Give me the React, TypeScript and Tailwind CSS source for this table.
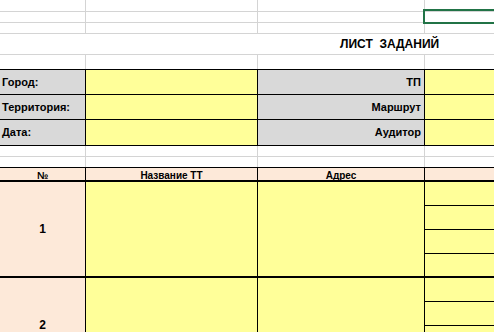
import React from 'react';

const cols = 'grid grid-cols-[86px_172px_167px_1fr]';
const font = { fontFamily: '"Liberation Sans", Arial, sans-serif' };

function BlankRow({ h, bottom = true }: { h: string; bottom?: boolean }) {
  return (
    <div className={`${cols} ${h} ${bottom ? 'border-b border-[#d4d4d4]' : ''}`}>
      <div className="border-r border-[#d4d4d4]" />
      <div className="border-r border-[#d4d4d4]" />
      <div className="border-r border-[#d4d4d4]" />
      <div />
    </div>
  );
}

function InfoRow({ left, right, h, top = false }: { left: string; right: string; h: string; top?: boolean }) {
  return (
    <div className={`${cols} ${h} border-b border-black ${top ? 'border-t' : ''}`}>
      <div className="bg-[#d9d9d9] border-r border-black flex items-center pl-[2px] text-[11px] font-bold">{left}</div>
      <div className="bg-[#ffff99] border-r border-black" />
      <div className="bg-[#d9d9d9] border-r border-black flex items-center justify-end pr-[3px] text-[11px] font-bold">{right}</div>
      <div className="bg-[#ffff99]" />
    </div>
  );
}

function TaskRow({ n }: { n: number }) {
  return (
    <div className={`${cols} h-[96px] border-b-2 border-black`}>
      <div className="bg-[#fde9d9] border-r border-black flex items-center justify-center text-[12px] font-bold">{n}</div>
      <div className="bg-[#ffff99] border-r border-black" />
      <div className="bg-[#ffff99] border-r border-black" />
      <div className="bg-[#ffff99] flex flex-col">
        <div className="h-[24px] border-b border-black" />
        <div className="h-[24px] border-b border-black" />
        <div className="h-[24px] border-b border-black" />
        <div className="flex-1" />
      </div>
    </div>
  );
}

export default function App() {
  return (
    <div className="relative w-[494px] h-[332px] overflow-hidden bg-white text-black" style={font}>
      <BlankRow h="h-[12px]" />
      <BlankRow h="h-[11px]" />
      <BlankRow h="h-[11px]" />
      <div className="h-[21px] border-b border-[#d4d4d4] flex items-center pl-[340px] text-[12px] font-bold whitespace-pre">
        ЛИСТ  ЗАДАНИЙ
      </div>
      <BlankRow h="h-[14px]" bottom={false} />

      <InfoRow left="Город:" right="ТП" h="h-[26px]" top />
      <InfoRow left="Территория:" right="Маршрут" h="h-[25px]" />
      <InfoRow left="Дата:" right="Аудитор" h="h-[26px]" />

      <BlankRow h="h-[11px]" />
      <BlankRow h="h-[10px]" bottom={false} />

      <div className={`${cols} h-[15px] border-t border-b-2 border-black bg-[#fde9d9] text-[10px] font-bold`}>
        <div className="border-r border-black flex items-center justify-center">№</div>
        <div className="border-r border-black flex items-center justify-center">Название ТТ</div>
        <div className="border-r border-black flex items-center justify-center">Адрес</div>
        <div />
      </div>

      <TaskRow n={1} />
      <TaskRow n={2} />

      {/* selected cell */}
      <div className="absolute left-[423px] top-[9px] w-[90px] h-[15px] border-2 border-[#217346]" />
    </div>
  );
}
